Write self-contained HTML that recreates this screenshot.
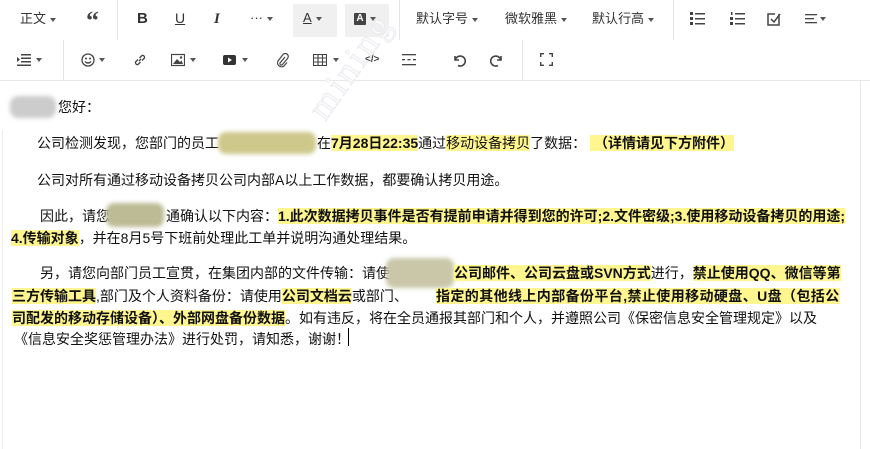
<!DOCTYPE html>
<html><head><meta charset="utf-8"><style>
*{margin:0;padding:0;box-sizing:border-box}
body{width:870px;height:449px;background:#fff;position:relative;overflow:hidden;font-family:"Liberation Sans","Noto Sans CJK SC",sans-serif;color:#222}
.t{position:absolute;font-size:13px;color:#333;line-height:16px}
.ic{position:absolute}
.dv{position:absolute;width:1px;background:#e6e6e6}
.car{display:inline-block;width:0;height:0;border-left:3px solid transparent;border-right:3px solid transparent;border-top:4px solid #555;vertical-align:middle;margin-left:4px}
.l{position:absolute;font-size:14px;line-height:20px;white-space:nowrap;color:#111}
.h{background:#fff68f;font-weight:bold}
.hn{background:#fff68f}
.bl{position:absolute;filter:blur(2px);border-radius:8px}
</style></head><body>
<!-- toolbar row 1 -->
<div class="t" style="left:20px;top:11px">正文<span class="car"></span></div>
<div class="t" style="left:86px;top:8px;font-size:26px;line-height:26px;font-weight:bold;color:#444;font-family:'Liberation Serif',serif">“</div>
<div class="dv" style="left:117px;top:0;height:40px"></div>
<div class="t" style="left:137px;top:11px;font-weight:bold;font-size:15px">B</div>
<div class="t" style="left:175px;top:10px;font-size:14px;text-decoration:underline">U</div>
<div class="t" style="left:214px;top:11px;font-style:italic;font-weight:bold;font-size:15px;font-family:'Liberation Serif',serif">I</div>
<div class="t" style="left:250px;top:10px">···<span class="car"></span></div>
<div style="position:absolute;left:293px;top:4px;width:44px;height:33px;background:#f0f0f0"></div>
<div class="t" style="left:303px;top:10px;text-decoration:underline">A<span class="car"></span></div>
<div style="position:absolute;left:345px;top:4px;width:44px;height:33px;background:#f0f0f0"></div>
<div style="position:absolute;left:354px;top:13px;width:12px;height:12px;background:#444;color:#fff;font-size:10px;font-weight:bold;text-align:center;line-height:12px;border-radius:1px">A</div>
<span class="car" style="position:absolute;left:366px;top:17px"></span>
<div class="dv" style="left:399px;top:0;height:40px"></div>
<div class="t" style="left:416px;top:11px">默认字号<span class="car"></span></div>
<div class="t" style="left:505px;top:11px">微软雅黑<span class="car"></span></div>
<div class="t" style="left:592px;top:11px">默认行高<span class="car"></span></div>
<div class="dv" style="left:673px;top:0;height:40px"></div>
<svg class="ic" style="left:690px;top:12px" width="16" height="14"><g fill="#444"><rect x="0" y="0" width="3" height="3"/><rect x="0" y="5" width="3" height="3"/><rect x="0" y="10" width="3" height="3"/><rect x="5" y="1" width="10" height="1.5"/><rect x="5" y="6" width="10" height="1.5"/><rect x="5" y="11" width="10" height="1.5"/></g></svg>
<svg class="ic" style="left:730px;top:12px" width="16" height="14"><g fill="#444"><rect x="1" y="0" width="1.5" height="3"/><rect x="0" y="5" width="3" height="3"/><rect x="0" y="10" width="3" height="3"/><rect x="5" y="1" width="10" height="1.5"/><rect x="5" y="6" width="10" height="1.5"/><rect x="5" y="11" width="10" height="1.5"/></g></svg>
<svg class="ic" style="left:766px;top:11px" width="16" height="16"><path d="M13 3V14H2V3H9" fill="none" stroke="#444" stroke-width="1.5"/><path d="M5 8L8 11L14 3" fill="none" stroke="#444" stroke-width="1.5"/></svg>
<svg class="ic" style="left:805px;top:13px" width="12" height="12"><g fill="#444"><rect x="0" y="1" width="12" height="1.3"/><rect x="0" y="5" width="9" height="1.3"/><rect x="0" y="9" width="12" height="1.3"/></g></svg>
<span class="car" style="position:absolute;left:816px;top:17px"></span>
<!-- row 2 -->
<svg class="ic" style="left:17px;top:54px" width="14" height="12"><g fill="#444"><path d="M0 3L3 5.5L0 8Z"/><rect x="4" y="0" width="10" height="1.5"/><rect x="4" y="3.5" width="10" height="1.5"/><rect x="4" y="7" width="10" height="1.5"/><rect x="0" y="10.5" width="14" height="1.5"/></g></svg>
<span class="car" style="position:absolute;left:32px;top:58px"></span>
<div class="dv" style="left:63px;top:40px;height:40px"></div>
<svg class="ic" style="left:81px;top:53px" width="14" height="14"><circle cx="7" cy="7" r="6" fill="none" stroke="#444" stroke-width="1.3"/><circle cx="5" cy="5.5" r="1" fill="#444"/><circle cx="9" cy="5.5" r="1" fill="#444"/><path d="M4 8.5Q7 11.5 10 8.5" fill="none" stroke="#444" stroke-width="1.3"/></svg>
<span class="car" style="position:absolute;left:95px;top:58px"></span>
<svg class="ic" style="left:133px;top:53px" width="14" height="14"><path d="M6 8L8 6M5 6.5L2.5 9A2 2 0 0 0 5 11.5L7.5 9M9 7.5L11.5 5A2 2 0 0 0 9 2.5L6.5 5" fill="none" stroke="#444" stroke-width="1.3"/></svg>
<svg class="ic" style="left:171px;top:53px" width="14" height="14"><rect x="0.5" y="1.5" width="13" height="11" fill="none" stroke="#444" stroke-width="1.2"/><path d="M2 11L6 6L9 9L10.5 7.5L12 11Z" fill="#444"/><circle cx="10" cy="4.5" r="1.2" fill="#444"/></svg>
<span class="car" style="position:absolute;left:186px;top:58px"></span>
<svg class="ic" style="left:223px;top:54px" width="14" height="12"><rect x="0" y="1" width="13" height="10" rx="2" fill="#333"/><path d="M5 3.5L9 6L5 8.5Z" fill="#fff"/></svg>
<span class="car" style="position:absolute;left:238px;top:58px"></span>
<svg class="ic" style="left:275px;top:52px" width="14" height="16"><path d="M10 5L5 11A1.5 1.5 0 0 0 7 13L12.5 6.5A3 3 0 0 0 8 2.5L3 9A4 4 0 0 0 9 14L12 10.5" fill="none" stroke="#444" stroke-width="1.2"/></svg>
<svg class="ic" style="left:313px;top:54px" width="14" height="12"><g fill="none" stroke="#444" stroke-width="1.1"><rect x="0.5" y="0.5" width="13" height="11"/><path d="M0.5 4H13.5M0.5 8H13.5M5 0.5V11.5M9.5 0.5V11.5"/></g></svg>
<span class="car" style="position:absolute;left:329px;top:58px"></span>
<div class="t" style="left:365px;top:52px;font-size:10px;font-weight:bold;color:#444">&lt;/&gt;</div>
<svg class="ic" style="left:402px;top:54px" width="14" height="12"><g fill="#444"><rect x="0" y="0" width="14" height="1.3"/><rect x="0" y="5" width="3" height="1.3"/><rect x="5.5" y="5" width="3" height="1.3"/><rect x="11" y="5" width="3" height="1.3"/><rect x="0" y="10" width="14" height="1.3"/></g></svg>
<svg class="ic" style="left:452px;top:53px" width="14" height="14"><path d="M3 3V7H7M3.5 6.5A5 5 0 1 1 6 12.5" fill="none" stroke="#444" stroke-width="1.6"/></svg>
<svg class="ic" style="left:490px;top:53px" width="14" height="14"><path d="M11 3V7H7M10.5 6.5A5 5 0 1 0 8 12.5" fill="none" stroke="#444" stroke-width="1.6"/></svg>
<div class="dv" style="left:522px;top:40px;height:40px"></div>
<svg class="ic" style="left:540px;top:53px" width="13" height="13"><path d="M0.7 4V0.7H4M9 0.7H12.3V4M12.3 9V12.3H9M4 12.3H0.7V9" fill="none" stroke="#444" stroke-width="1.4"/></svg>
<!-- editor frame -->
<div style="position:absolute;left:0;top:80px;width:870px;height:1px;background:#e8e8e8"></div>
<div style="position:absolute;left:2px;top:130px;width:1px;height:319px;background:#eee"></div>
<div style="position:absolute;left:860px;top:80px;width:1px;height:369px;background:#e8e8e8"></div>
<!-- watermark -->
<div style="position:absolute;left:290px;top:45px;transform:rotate(-55deg);font-size:36px;color:#fafafc;font-family:'Liberation Serif',serif;-webkit-text-stroke:0.6px #e4e4ea;letter-spacing:3px">mining</div>
<!-- content -->
<div class="bl" style="left:10px;top:96px;width:46px;height:22px;background:#ccc"></div>
<div class="l" style="left:58px;top:97px">您好：</div>
<div class="l" style="left:37px;top:133px">公司检测发现，您部门的员工</div>
<div class="bl" style="left:218px;top:132px;width:98px;height:22px;background:#cec88a"></div>
<div class="l" style="left:317px;top:133px">在<span class="h">7月28日22:35</span>通过<span class="hn">移动设备拷贝</span>了数据：&nbsp;<span class="h">&nbsp;（详情请见下方附件）</span></div>
<div class="l" style="left:37px;top:170px">公司对所有通过移动设备拷贝公司内部A以上工作数据，都要确认拷贝用途。</div>
<div class="l" style="left:40px;top:206px">因此，请您</div>
<div class="bl" style="left:106px;top:203px;width:58px;height:24px;background:#bdbb95"></div>
<div class="l" style="left:166px;top:206px">通确认以下内容：<span class="h">1.此次数据拷贝事件是否有提前申请并得到您的许可;2.文件密级;3.使用移动设备拷贝的用途;</span></div>
<div class="l" style="left:11px;top:228px"><span class="h">4.传输对象</span>，并在8月5号下班前处理此工单并说明沟通处理结果。</div>
<div class="l" style="left:40px;top:263px">另，请您向部门员工宣贯，在集团内部的文件传输：请使</div>
<div class="bl" style="left:386px;top:258px;width:68px;height:30px;background:#c9c7a8"></div>
<div class="l" style="left:454px;top:263px"><span class="h">公司邮件、公司云盘或SVN方式</span>进行，<span class="h">禁止使用QQ、微信等第</span></div>
<div class="l" style="left:12px;top:286px"><span class="h">三方传输工具</span>,部门及个人资料备份：请使用<span class="h">公司文档云</span>或部门、</div>
<div class="l" style="left:436px;top:286px"><span class="h" style="letter-spacing:0.4px">指定的其他线上内部备份平台,禁止使用移动硬盘、U盘（包括公</span></div>
<div class="l" style="left:12px;top:308px"><span class="h">司配发的移动存储设备）、外部网盘备份数据</span>。如有违反，将在全员通报其部门和个人，并遵照公司《保密信息安全管理规定》以及</div>
<div class="l" style="left:14px;top:329px">《信息安全奖惩管理办法》进行处罚，请知悉，谢谢！</div>
<div style="position:absolute;left:348px;top:328px;width:1px;height:18px;background:#000"></div>
</body></html>
